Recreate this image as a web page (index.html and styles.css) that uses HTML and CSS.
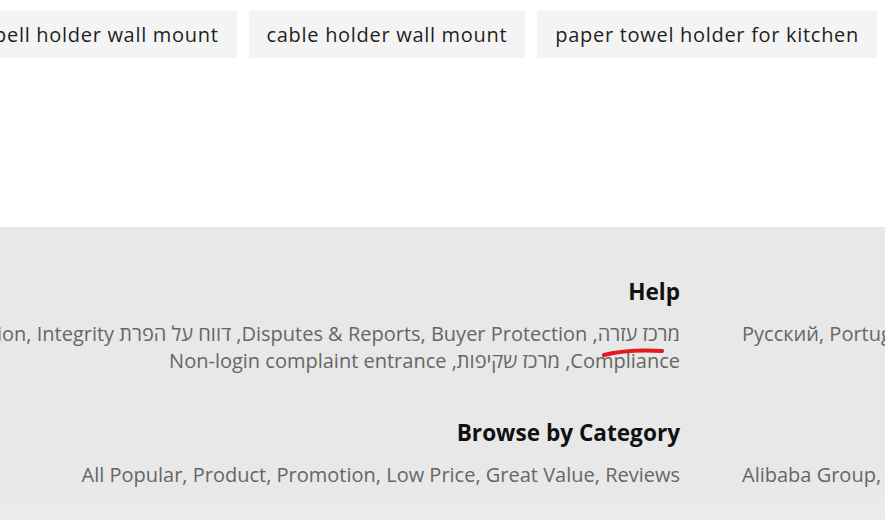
FILE: index.html
```html
<!DOCTYPE html>
<html lang="he">
<head>
<meta charset="utf-8">
<title>Footer</title>
<link rel="stylesheet" href="styles.css">
</head>
<body>
<section class="related">
  <a class="chip" href="#">dumbbell holder wall mount</a>
  <a class="chip" href="#">cable holder wall mount</a>
  <a class="chip" href="#">paper towel holder for kitchen</a>
</section>
<footer class="footer">
  <div class="footer-sec">
    <h3 class="f-title">Help</h3>
    <p class="f-links">מרכז עזרה, Disputes &amp; Reports, Buyer Protection, דווח על הפרת IPR, Regulated Information, Integrity Compliance, מרכז שקיפות, Non-login complaint entrance</p>
    <p class="f-side">Русский, Português, Deutsch, Français, Italiano</p>
  </div>
  <div class="footer-sec">
    <h3 class="f-title">Browse by Category</h3>
    <p class="f-links">All Popular, Product, Promotion, Low Price, Great Value, Reviews</p>
    <p class="f-side">Alibaba Group, Taobao Marketplace, Tmall.com</p>
  </div>
  <svg class="mark" width="885" height="520" viewBox="0 0 885 520" aria-hidden="true">
    <path d="M604 355 Q628 349 662 351" fill="none" stroke="#e3191f" stroke-width="4.2" stroke-linecap="round"/>
  </svg>
</footer>
</body>
</html>
```

FILE: styles.css
```css
html, body {
  margin: 0;
  padding: 0;
  background: #fff;
  overflow: hidden;
  height: 520px;
}
body {
  font-family: "Open Sans", "Noto Sans", sans-serif;
}
.related {
  display: flex;
  justify-content: flex-end;
  gap: 12px;
  padding: 11px 8px 169px 0;
  overflow: hidden;
  white-space: nowrap;
}
.chip {
  flex: 0 0 auto;
  display: block;
  background: #f4f4f4;
  color: #1f1f1f;
  text-decoration: none;
  font-size: 20px;
  letter-spacing: 0.7px;
  line-height: 47px;
  height: 47px;
  padding: 0 18px;
}
.footer {
  position: relative;
  background: linear-gradient(#e8e8e8 0, #e8e8e8 250px, #ebebeb 100%);
  height: 293px;
  overflow: hidden;
  padding-top: 50px;
  box-sizing: border-box;
  direction: rtl;
}
.footer-sec {
  display: grid;
  grid-template-columns: 143px 960px;
  column-gap: 62px;
  margin-bottom: 44px;
}
.f-title {
  grid-column: 2;
  grid-row: 1;
  margin: 0 0 13px;
  font-size: 22.6px;
  line-height: 30px;
  font-weight: 700;
  color: #111;
  text-align: right;
}
.f-links {
  grid-column: 2;
  grid-row: 2;
  margin: 0;
  font-size: 20px;
  line-height: 27px;
  color: #666;
  text-align: right;
}
.f-side {
  grid-column: 1;
  grid-row: 2;
  margin: 0;
  font-size: 20px;
  line-height: 27px;
  color: #666;
  direction: ltr;
  text-align: left;
  white-space: nowrap;
}
.mark {
  position: absolute;
  left: 0;
  top: -227px;
  pointer-events: none;
}
```
